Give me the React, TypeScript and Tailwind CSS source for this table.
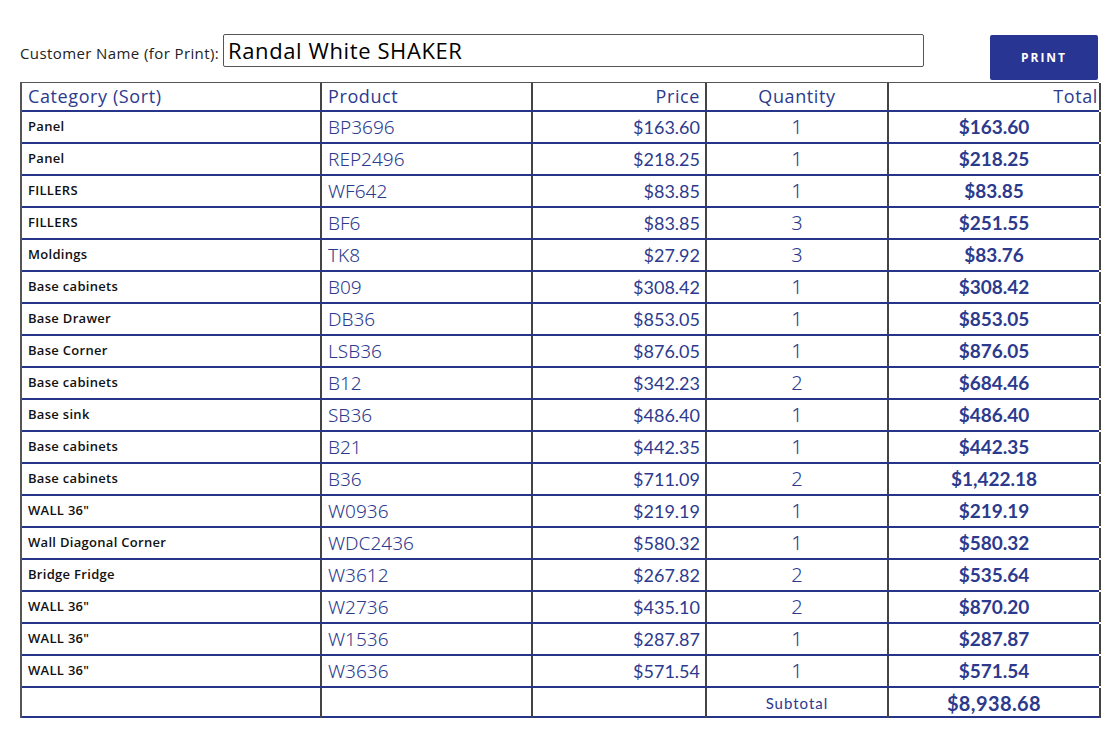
import React from "react";

type Line = {
  category: string;
  product: string;
  price: string;
  qty: number;
  total: string;
};

const lines: Line[] = [
  { category: "Panel", product: "BP3696", price: "$163.60", qty: 1, total: "$163.60" },
  { category: "Panel", product: "REP2496", price: "$218.25", qty: 1, total: "$218.25" },
  { category: "FILLERS", product: "WF642", price: "$83.85", qty: 1, total: "$83.85" },
  { category: "FILLERS", product: "BF6", price: "$83.85", qty: 3, total: "$251.55" },
  { category: "Moldings", product: "TK8", price: "$27.92", qty: 3, total: "$83.76" },
  { category: "Base cabinets", product: "B09", price: "$308.42", qty: 1, total: "$308.42" },
  { category: "Base Drawer", product: "DB36", price: "$853.05", qty: 1, total: "$853.05" },
  { category: "Base Corner", product: "LSB36", price: "$876.05", qty: 1, total: "$876.05" },
  { category: "Base cabinets", product: "B12", price: "$342.23", qty: 2, total: "$684.46" },
  { category: "Base sink", product: "SB36", price: "$486.40", qty: 1, total: "$486.40" },
  { category: "Base cabinets", product: "B21", price: "$442.35", qty: 1, total: "$442.35" },
  { category: "Base cabinets", product: "B36", price: "$711.09", qty: 2, total: "$1,422.18" },
  { category: 'WALL 36"', product: "W0936", price: "$219.19", qty: 1, total: "$219.19" },
  { category: "Wall Diagonal Corner", product: "WDC2436", price: "$580.32", qty: 1, total: "$580.32" },
  { category: "Bridge Fridge", product: "W3612", price: "$267.82", qty: 2, total: "$535.64" },
  { category: 'WALL 36"', product: "W2736", price: "$435.10", qty: 2, total: "$870.20" },
  { category: 'WALL 36"', product: "W1536", price: "$287.87", qty: 1, total: "$287.87" },
  { category: 'WALL 36"', product: "W3636", price: "$571.54", qty: 1, total: "$571.54" },
];

const rowCls =
  "grid grid-cols-[300px_211px_174px_182px_212px] border-b-2 border-[#26348a]";
const cell = "border-r-2 border-[#444] flex items-center";
const head = "font-['Open_Sans',sans-serif] text-[18px] tracking-[0.6px]";

export default function App() {
  return (
    <div className="bg-white min-h-[739px] pt-[34px] pl-[20px] font-['Lato',sans-serif]">
      <div className="w-[1079px]">
        <div className="flex items-start">
          <label className="mt-[8px] text-[15px] tracking-[0.4px] text-[#222] font-['Open_Sans',sans-serif] whitespace-nowrap">
            Customer Name (for Print):
          </label>
          <div className="ml-[4px] w-[701px] h-[33px] border border-[#555] rounded-[2px] flex items-center px-[4px] text-[22px] tracking-[0.6px] text-black font-['Open_Sans',sans-serif]">
            Randal White SHAKER
          </div>
          <button className="ml-auto mt-[1px] mr-[1px] w-[108px] h-[45px] rounded-[2px] bg-[#283593] text-white text-[12px] font-bold tracking-[2px] font-['Open_Sans',sans-serif]">
            PRINT
          </button>
        </div>

        <div className="mt-[2px] border-t border-l-2 border-[#555] text-[#2c3a8e]">
          <div className={`${rowCls} h-[29px]`}>
            <div className={`${cell} ${head} pl-[6px]`}>Category (Sort)</div>
            <div className={`${cell} ${head} pl-[6px]`}>Product</div>
            <div className={`${cell} ${head} justify-end pr-[5px]`}>Price</div>
            <div className={`${cell} ${head} justify-center`}>Quantity</div>
            <div className={`${cell} ${head} justify-end pr-[1px]`}>Total</div>
          </div>
          {lines.map((l, i) => (
            <div key={`line-${i}`} className={`${rowCls} h-[32px]`}>
              <div className={`${cell} pl-[6px] text-[13px] tracking-[0.3px] font-semibold text-[#111] font-['Open_Sans',sans-serif]`}>
                {l.category}
              </div>
              <div className={`${cell} pl-[6px] text-[19px] font-['Noto_Sans',sans-serif] font-light`}>
                {l.product}
              </div>
              <div className={`${cell} justify-end pr-[5px] text-[18px]`}>{l.price}</div>
              <div className={`${cell} justify-center text-[20px] font-['Noto_Sans',sans-serif] font-light`}>
                {l.qty}
              </div>
              <div className={`${cell} justify-center text-[19px] font-bold`}>{l.total}</div>
            </div>
          ))}
          <div className={`${rowCls} h-[30px]`}>
            <div className={cell}></div>
            <div className={cell}></div>
            <div className={cell}></div>
            <div className={`${cell} justify-center text-[15px] tracking-[1px]`}>Subtotal</div>
            <div className={`${cell} justify-center text-[20px] tracking-[0.4px] font-bold`}>$8,938.68</div>
          </div>
        </div>
      </div>
    </div>
  );
}
